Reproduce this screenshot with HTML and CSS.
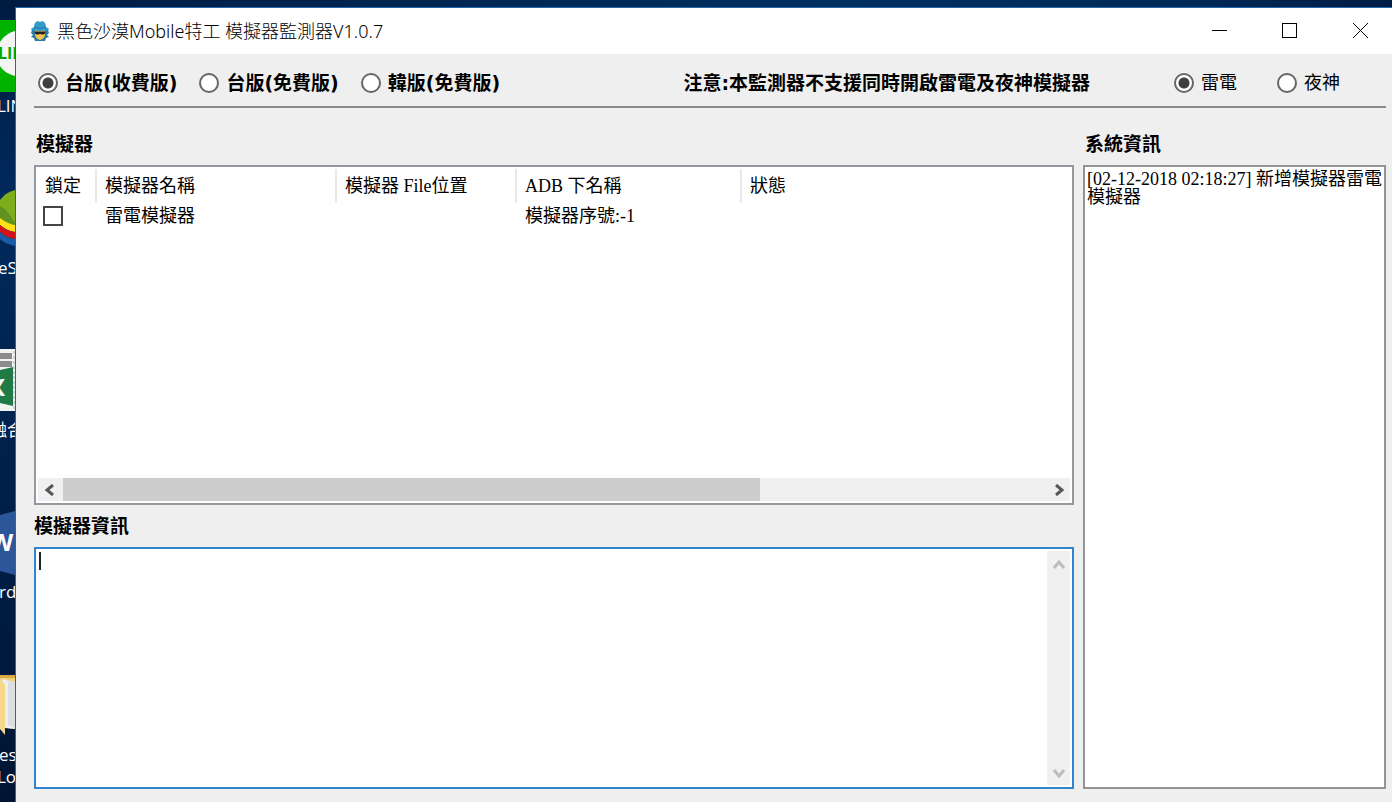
FILE: index.html
```html
<!DOCTYPE html>
<html lang="zh-Hant">
<head>
<meta charset="utf-8">
<title>黑色沙漠Mobile特工 模擬器監測器V1.0.7</title>
<link rel="stylesheet" href="styles.css">
</head>
<body class="desktop">
<aside class="icons">
  <svg class="icon icon-line" width="15" height="72" viewBox="0 0 15 72"><rect width="15" height="72" fill="#00b300"/><path d="M15 11C8 13 3 17 0 22V46C3 51 8 54 15 56Z" fill="#f4f4f4"/></svg>
  <span class="icon line-word">LINE</span>
  <span class="icon label label-line">LINE</span>
  <svg class="icon icon-blue" width="15" height="56" viewBox="0 0 15 56"><path d="M0 10Q6 2 15 0V38L0 28Z" fill="#7fae1c"/><path d="M0 16Q8 20 15 33V38L0 28Z" fill="#5f9220"/><path d="M0 28Q8 34 15 35V42Q7 41 0 35Z" fill="#ffe11a"/><path d="M0 35Q7 41 15 42V49Q6 48 0 42Z" fill="#d3131c"/><path d="M0 42Q6 48 15 49V56Q5 54 0 49Z" fill="#1a5aa8"/></svg>
  <span class="icon label label-es">eSt</span>
  <svg class="icon icon-excel" width="15" height="62" viewBox="0 0 15 62"><rect width="15" height="62" fill="#f2f2f2"/><path d="M0 4H12V10H0ZM0 12H12V18H0Z" fill="#8c8c8c"/><path d="M0 21L13 18V57L0 54Z" fill="#1f7a45"/><path d="M14 2V60" stroke="#9db9c9" stroke-dasharray="3 2"/></svg>
  <span class="icon letter letter-x">X</span>
  <span class="icon label label-mix">融合</span>
  <svg class="icon icon-word" width="15" height="64" viewBox="0 0 15 64"><path d="M0 4L15 0V64L0 60Z" fill="#2b579a"/></svg>
  <span class="icon letter letter-w">W</span>
  <span class="icon label label-word">rd</span>
  <svg class="icon icon-folder" width="15" height="62" viewBox="0 0 15 62"><path d="M0 0H15V4H0Z" fill="#d9ab42"/><path d="M0 3H15V54L0 52Z" fill="#f0cf7a"/><path d="M2 4L15 7V54L5 53Z" fill="#eceef0"/><path d="M8 6L15 7V53L8 50Z" fill="#dcdfe2"/><path d="M0 4L5 10V60L0 54Z" fill="#f6d988"/></svg>
  <span class="icon label label-des">es</span>
  <span class="icon label label-lo">Lo</span>
</aside>
<div class="window">
  <header class="titlebar">
    <svg width="20" height="20" viewBox="0 0 20 20" aria-hidden="true"><path d="M2 9H18L19 12L17 14L19 16L16 17L15 20H5L4 17L1 16L3 14L1 12Z" fill="#287ba6"/><path d="M5 9H15V14Q14 18 10 19Q6 18 5 14Z" fill="#fac34e"/><path d="M4 6Q4 1 8 0L10 1L12 0Q16 1 16 6Q19 7 19 9Q15 10 10 10Q5 10 1 9Q1 7 4 6Z" fill="#349bc8"/><path d="M4 6Q10 9 16 6" fill="none" stroke="#21779f"/><path d="M5 11H15L14 13H11L10 12L9 13H6Z" fill="#222" stroke="#222"/></svg>
    <h1 class="title">黑色沙漠Mobile特工 模擬器監測器V1.0.7</h1>
    <div class="controls">
      <button class="control" type="button" aria-label="最小化"><svg width="16" height="16" viewBox="0 0 16 16"><path d="M0 7.5H15" stroke="#000"/></svg></button>
      <button class="control" type="button" aria-label="最大化"><svg width="16" height="16" viewBox="0 0 16 16"><rect x=".5" y=".5" width="14" height="14" fill="none" stroke="#000"/></svg></button>
      <button class="control" type="button" aria-label="關閉"><svg width="16" height="16" viewBox="0 0 16 16"><path d="M0 0L15 15M15 0L0 15" stroke="#000"/></svg></button>
    </div>
  </header>
  <div class="content">
    <form class="toolbar">
      <div class="editions">
        <label class="option"><input class="radio" type="radio" name="edition" checked>台版(收費版)</label>
        <label class="option"><input class="radio" type="radio" name="edition">台版(免費版)</label>
        <label class="option"><input class="radio" type="radio" name="edition">韓版(免費版)</label>
      </div>
      <p class="notice">注意:本監測器不支援同時開啟雷電及夜神模擬器</p>
      <div class="engines">
        <label class="option option-plain"><input class="radio" type="radio" name="engine" checked>雷電</label>
        <label class="option option-plain"><input class="radio" type="radio" name="engine">夜神</label>
      </div>
    </form>
    <main class="panes">
      <section class="left">
        <h2 class="heading heading-inset">模擬器</h2>
        <div class="list">
          <table class="table">
            <thead><tr><th class="c-lock">鎖定</th><th class="c-name">模擬器名稱</th><th class="c-file">模擬器 File位置</th><th class="c-adb">ADB 下名稱</th><th>狀態</th></tr></thead>
            <tbody><tr><td class="cell-check"><input class="check" type="checkbox" aria-label="鎖定 雷電模擬器"></td><td>雷電模擬器</td><td></td><td>模擬器序號:-1</td><td></td></tr></tbody>
          </table>
          <div class="hscroll">
            <button class="arrow" type="button" aria-label="向左"><svg width="14" height="12" viewBox="0 0 14 12"><path d="M9 1L3 6L9 11" fill="none" stroke="#555" stroke-width="3"/></svg></button>
            <div class="track"><div class="thumb"></div></div>
            <button class="arrow" type="button" aria-label="向右"><svg width="14" height="12" viewBox="0 0 14 12"><path d="M5 1L11 6L5 11" fill="none" stroke="#555" stroke-width="3"/></svg></button>
          </div>
        </div>
        <h2 class="heading"><label for="info">模擬器資訊</label></h2>
        <div class="info">
          <textarea class="info-text" id="info"></textarea>
          <span class="caret"></span>
          <div class="vscroll">
            <button class="arrow arrow-v" type="button" aria-label="向上"><svg width="12" height="10" viewBox="0 0 12 10"><path d="M1 9L6 3L11 9" fill="none" stroke="#bdbdbd" stroke-width="3"/></svg></button>
            <button class="arrow arrow-v" type="button" aria-label="向下"><svg width="12" height="10" viewBox="0 0 12 10"><path d="M1 2L6 8L11 2" fill="none" stroke="#bdbdbd" stroke-width="3"/></svg></button>
          </div>
        </div>
      </section>
      <section class="right">
        <h2 class="heading heading-inset">系統資訊</h2>
        <div class="log" role="log">[02-12-2018 02:18:27] 新增模擬器雷電模擬器</div>
      </section>
    </main>
  </div>
</div>
</body>
</html>
```

FILE: styles.css
```css
* { box-sizing: border-box; }

.desktop {
  margin: 0;
  min-height: 100vh;
  padding-top: 7px;
  display: grid;
  grid-template-columns: 15px minmax(0, 1fr);
  background: linear-gradient(90deg, #001c44, #00305f 60%, #002a58 85%, #001c44);
  color: #000;
  font: 18px/18px "Liberation Serif", "Noto Sans CJK TC", serif;
  overflow: hidden;
}

/* Desktop shortcuts, partly behind the window */
.icons {
  position: relative;
  overflow: hidden;
  margin-top: -7px;
  background: linear-gradient(#001b40, #002a5c 25%, #00204a 60%, #001533);
  color: #fff;
  font-family: "Open Sans", "Noto Sans CJK TC", sans-serif;
}
.icon { position: absolute; left: 0; white-space: nowrap; }
.icon-line { top: 20px; }
.line-word { top: 44px; left: -2px; color: #00a800; font-size: 16px; font-weight: 700; }
.icon-blue { top: 190px; }
.icon-excel { top: 349px; }
.icon-word { top: 511px; }
.icon-folder { top: 675px; }
.letter { font-size: 24px; line-height: 24px; font-weight: 700; }
.letter-x { top: 375px; left: -11px; }
.letter-w { top: 530px; left: -10px; }
.label { font-size: 17px; }
.label-line { top: 97px; left: -3px; }
.label-es { top: 259px; left: -2px; }
.label-mix { top: 421px; left: -10px; }
.label-word { top: 583px; left: -1px; }
.label-des { top: 746px; left: -1px; }
.label-lo { top: 768px; left: -3px; }

.window {
  display: flex;
  flex-direction: column;
  border: solid #2468ac;
  border-width: 1px 0 0 1px;
  background: #efefef;
}

.titlebar {
  display: flex;
  align-items: center;
  height: 46px;
  padding-left: 14px;
  gap: 7px;
  background: #fff;
}
.title {
  margin: 0;
  font: 300 18px/24px "Noto Sans", "Noto Sans CJK TC", sans-serif;
}
.controls { display: flex; margin-left: auto; }
.control {
  display: flex;
  align-items: center;
  justify-content: center;
  width: 70px;
  height: 46px;
  margin: 0;
  padding: 0;
  border: 0;
  background: none;
}
.control:last-child { width: 67px; padding-left: 5px; }

.content {
  flex: 1;
  display: flex;
  flex-direction: column;
  padding: 0 6px 13px 18px;
}

.toolbar {
  display: flex;
  align-items: center;
  height: 54px;
  padding: 6px 46px 0 4px;
  border-bottom: 2px solid #8a8a8a;
}
.editions { display: flex; gap: 22px; }
.engines { display: flex; gap: 40px; }
.option, .notice, .heading {
  font: 700 19px/20px "DejaVu Sans", "Noto Sans CJK TC", sans-serif;
  white-space: nowrap;
}
.option { display: flex; align-items: center; gap: 7px; }
.option-plain {
  font-size: 18px;
  font-weight: 400;
}
.notice { margin: 0 84px 0 auto; }
.radio {
  appearance: none;
  width: 20px;
  height: 20px;
  margin: 0;
  border: 2px solid #666;
  border-radius: 50%;
  background: #fff;
}
.radio:checked { background: radial-gradient(circle, #404040 5px, #fff 6px); }

.panes {
  flex: 1;
  display: grid;
  grid-template-columns: minmax(0, 1fr) 303px;
  gap: 9px;
}
.left { display: flex; flex-direction: column; padding-top: 26px; }
.right { display: flex; flex-direction: column; padding-top: 26px; }
.heading { margin: 0; padding-bottom: 11px; }
.heading-inset { padding-left: 2px; }

.list {
  flex: 332 1 0;
  display: flex;
  flex-direction: column;
  justify-content: space-between;
  margin-bottom: 11px;
  padding: 2px;
  border: 2px solid #9698a0;
  background: #fff;
}
.table {
  width: 100%;
  table-layout: fixed;
  border-collapse: collapse;
}
.table th, .table td {
  padding: 0 0 0 8px;
  text-align: left;
  font-weight: 400;
  white-space: nowrap;
}
.table th { height: 34px; border-left: 2px solid #e8e8e8; }
.table td { height: 26px; padding-left: 9px; }
.table .c-lock { width: 58px; padding-left: 7px; border-left: 0; }
.c-name { width: 240px; }
.c-file { width: 180px; }
.c-adb { width: 225px; }
.table .cell-check { padding-left: 5px; }
.check {
  appearance: none;
  display: block;
  width: 20px;
  height: 20px;
  margin: 0;
  border: 2px solid #444;
  background: #fff;
}

.hscroll { display: flex; height: 23px; background: #f0f0f0; }
.arrow {
  display: flex;
  align-items: center;
  justify-content: center;
  width: 25px;
  margin: 0;
  padding: 0;
  border: 0;
  background: none;
}
.track { flex: 1; }
.thumb { width: 71%; height: 100%; background: #cdcdcd; }

.info {
  position: relative;
  flex: 234 1 0;
  display: flex;
  padding: 2px;
  border: 2px solid #2f86cf;
  background: #fff;
}
.info-text {
  flex: 1;
  padding: 2px;
  border: 0;
  outline: 0;
  resize: none;
  background: none;
  font: inherit;
  caret-color: transparent;
}
.caret {
  position: absolute;
  top: 3px;
  left: 3px;
  width: 2px;
  height: 18px;
  background: #222;
}
.vscroll {
  display: flex;
  flex-direction: column;
  justify-content: space-between;
  width: 23px;
  background: #f0f0f0;
}
.arrow-v { width: 23px; height: 25px; }

.log {
  flex: 1;
  padding: 3px 0 0 2px;
  border: 2px solid #949494;
  background: #fff;
  overflow-wrap: anywhere;
}
```
